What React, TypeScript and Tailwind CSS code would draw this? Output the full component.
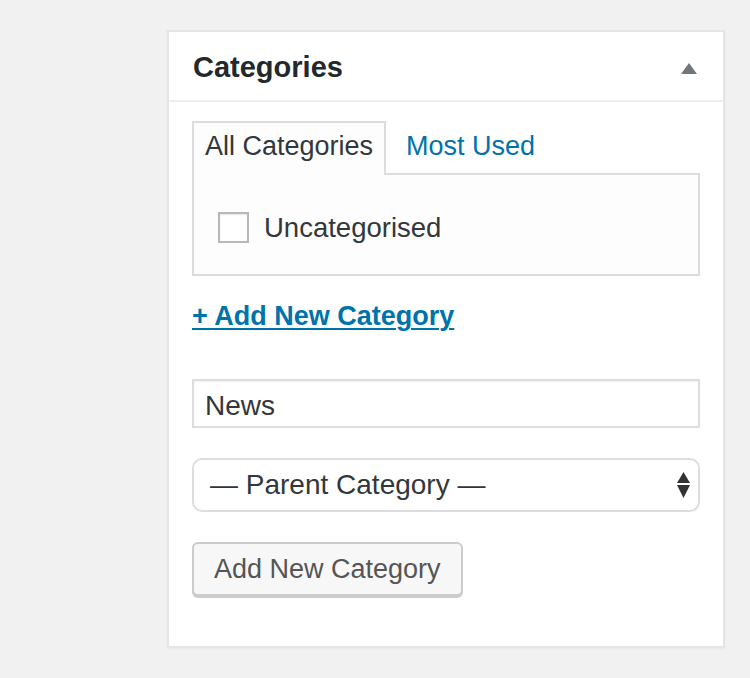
import React from "react";

export default function App() {
  return (
    <div
      className="w-[750px] h-[678px] bg-[#f1f1f1] pt-[30px] pl-[167px]"
      style={{ fontFamily: '"Liberation Sans", Arial, sans-serif' }}
    >
      <div className="w-[558px] h-[618px] bg-white border-2 border-[#e5e5e5] shadow-[0_1px_2px_rgba(0,0,0,0.04)] flex flex-col">
        {/* Header */}
        <div className="h-[70px] border-b-2 border-[#eeeeee] flex items-center justify-between pl-[24px] pr-[26px]">
          <div className="text-[29px] font-bold text-[#23282d] leading-[68px] pt-[2px]">Categories</div>
          <svg width="16" height="11" viewBox="0 0 16 11" className="mt-[4px]">
            <polygon points="8,0 16,11 0,11" fill="#72777c" />
          </svg>
        </div>

        {/* Body */}
        <div className="flex flex-col px-[23px] pt-[19px]">
          {/* Tabs */}
          <div className="flex items-start">
            <div className="relative z-10 h-[54px] border-2 border-b-0 border-[#dcdcde] bg-[#fdfdfd] px-[11px] pb-[6px] text-[27px] leading-[46px] text-[#32373c]">
              All Categories
            </div>
            <div className="ml-[20px] pt-[2px] text-[27px] leading-[46px] text-[#0073aa]">Most Used</div>
          </div>

          {/* Panel */}
          <div className="-mt-[2px] h-[103px] border-2 border-[#dcdcde] bg-[#fdfdfd] pt-[37px] pl-[24px]">
            <div className="flex items-center">
              <div className="w-[31px] h-[31px] border-2 border-[#b4b9be] bg-white shadow-[inset_0_1px_2px_rgba(0,0,0,0.1)]" />
              <div className="ml-[15px] text-[27.5px] leading-[31px] text-[#32373c]">Uncategorised</div>
            </div>
          </div>

          {/* Link */}
          <div className="mt-[25px] h-[30px]">
            <span className="text-[27px] font-bold leading-[30px] text-[#0073aa] underline decoration-2 underline-offset-[3px]">
              + Add New Category
            </span>
          </div>

          {/* Input */}
          <input
            defaultValue="News"
            className="mt-[48px] block w-full h-[49px] border-2 border-[#dddddd] bg-white pt-[4px] px-[11px] text-[28px] text-[#32373c] shadow-[inset_0_1px_2px_rgba(0,0,0,0.07)] outline-none"
            style={{ fontFamily: '"Liberation Sans", Arial, sans-serif' }}
          />

          {/* Select */}
          <div className="mt-[30px] h-[54px] rounded-[10px] border-2 border-[#dddddd] bg-white flex items-center justify-between pl-[16px] pr-[8px]">
            <span className="text-[28px] leading-none text-[#32373c]">— Parent Category —</span>
            <svg width="13" height="26" viewBox="0 0 13 26">
              <polygon points="6.5,0 13,11 0,11" fill="#333333" />
              <polygon points="0,13 13,13 6.5,26" fill="#333333" />
            </svg>
          </div>

          {/* Button */}
          <div className="mt-[30px] self-start h-[54px] flex items-center border-2 border-[#cccccc] rounded-[6px] bg-[#f7f7f7] shadow-[0_2px_0_#cccccc] px-[20px] text-[27px] leading-none text-[#555555]">
            Add New Category
          </div>
        </div>
      </div>
    </div>
  );
}
